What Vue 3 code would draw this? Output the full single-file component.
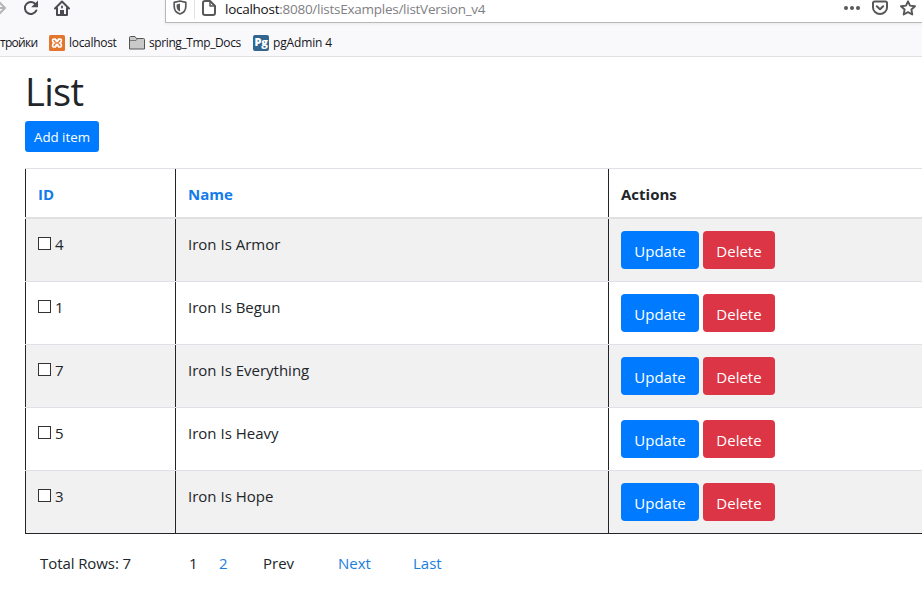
<script setup>
const rows = [
  { id: 4, name: 'Iron Is Armor' },
  { id: 1, name: 'Iron Is Begun' },
  { id: 7, name: 'Iron Is Everything' },
  { id: 5, name: 'Iron Is Heavy' },
  { id: 3, name: 'Iron Is Hope' },
]
</script>

<template>
  <div class="window">
    <header class="chrome">
      <div class="toolbar">
        <div class="nav">
          <svg class="forward" width="6" height="16" viewBox="0 0 6 16" fill="none" stroke="#b5b5b8" stroke-width="2"><path d="M0 8h4M-1 2l6 6-6 6" /></svg>
          <svg class="reload" width="16" height="16" viewBox="0 0 16 16" fill="none" stroke="#4c4c50" stroke-width="2"><path d="M12.6 4.2A6 6 0 1 0 13.3 10.5" stroke-linecap="round" /><path d="M15 .5v6.800H8.200z" fill="#4c4c50" stroke="none" /></svg>
          <svg class="home" width="16" height="16" viewBox="0 0 16 16" fill="none" stroke="#4c4c50" stroke-width="2" stroke-linecap="round" stroke-linejoin="round"><path d="M1 8.500L8 1.500l7 7M3 8v7h10V8" /><path d="M6 15v-5h4v5z" fill="#4c4c50" stroke="none" /><path d="M8 6.500v1" stroke-width="1.800" /></svg>
        </div>
        <div class="address">
          <span class="shield"><svg width="14" height="15" viewBox="0 0 14 15"><path d="M7 1L12.800 2.400V6.500C12.800 10.400 10.500 12.800 7 14 3.500 12.800 1.200 10.400 1.200 6.500V2.400z" fill="none" stroke="#58585b" stroke-width="1.700" stroke-linejoin="round" /><path d="M7 3.600v7.900C4.800 10.500 3.600 9 3.600 6.500V4.400z" fill="#58585b" /></svg></span>
          <svg class="page-icon" width="14" height="16" viewBox="0 0 14 16" fill="none" stroke="#58585b" stroke-width="2" stroke-linejoin="round"><path d="M3 1h5l5 5v7a2 2 0 0 1-2 2H3a2 2 0 0 1-2-2V3a2 2 0 0 1 2-2z" /><path d="M8 1v5h5" stroke-width="1.500" /></svg>
          <span class="url"><b>localhost</b>:8080/listsExamples/listVersion_v4</span>
          <div class="tools">
            <svg width="16" height="16" viewBox="0 0 16 16" fill="#58585b"><circle cx="2" cy="8" r="2" /><circle cx="8" cy="8" r="2" /><circle cx="14" cy="8" r="2" /></svg>
            <svg class="pocket" width="16" height="16" viewBox="0 0 16 16" fill="none" stroke="#58585b" stroke-width="2" stroke-linecap="round" stroke-linejoin="round"><path d="M2.500 1.500h11A1.500 1.500 0 0 1 15 3V7.500A7 6.500 0 0 1 1 7.500V3A1.500 1.500 0 0 1 2.500 1.500z" /><path d="M4.800 6.200L8 9.300l3.200-3.100" /></svg>
            <svg class="star" width="16" height="16" viewBox="0 0 16 16" fill="none" stroke="#58585b" stroke-width="1.900" stroke-linejoin="round"><path d="M8 1.300l2 4.300 5 .6-3.600 3.300.9 5L8 12.200l-4.300 2.300.9-5L1 6.200 6 5.600z" /></svg>
          </div>
        </div>
      </div>
      <div class="bookmarks">
        <span class="bm bm-settings">тройки</span>
        <svg class="bm-icon" width="16" height="16" viewBox="0 0 16 16"><rect width="16" height="16" rx="1.500" fill="#e3752d" /><path d="M5.200 3.300h1.600L8 5l1.200-1.700h1.600c1.600 0 2.400.8 2.400 2.300 0 1-.3 1.800-1 2.400.7.600 1 1.400 1 2.400 0 1.500-.8 2.300-2.400 2.300H9.200L8 11l-1.200 1.700H5.200c-1.600 0-2.400-.8-2.400-2.300 0-1 .3-1.800 1-2.400-.7-.6-1-1.400-1-2.400 0-1.500.8-2.300 2.400-2.300z" fill="#fff" /><path d="M5 5.500l1 1.200M11 5.500L10 6.700M5 10.500l1-1.200M11 10.500L10 9.300M6.700 8h2.600" stroke="#e3752d" stroke-width="1.400" stroke-linecap="round" /></svg>
        <span class="bm bm-local">localhost</span>
        <svg class="bm-icon" width="16" height="16" viewBox="0 0 16 16"><path d="M.5 14V2.500A1 1 0 0 1 1.500 1.500H6l1.500 2h7a1 1 0 0 1 1 1V14z" fill="#c9c9c9" stroke="#555" /><path d="M1 5.500h6l1.200-1.500" fill="none" stroke="#777" /></svg>
        <span class="bm bm-docs">spring_Tmp_Docs</span>
        <span class="pg">Pg</span>
        <span class="bm bm-pg">pgAdmin 4</span>
      </div>
    </header>

    <main>
      <h1><span>List</span></h1>
      <button class="add"><span>Add item</span></button>
      <div class="table">
        <div class="row head">
          <div class="cell"><a class="th-id">ID</a></div>
          <div class="cell"><a class="th-name">Name</a></div>
          <div class="cell"><span class="th-actions">Actions</span></div>
        </div>
        <div v-for="row in rows" :key="row.id" class="row item">
          <div class="cell"><i class="check"></i><span>{{ row.id }}</span></div>
          <div class="cell"><span class="name">{{ row.name }}</span></div>
          <div class="cell actions">
            <button class="update">Update</button>
            <button class="delete">Delete</button>
          </div>
        </div>
      </div>
      <div class="pager">
        <span class="total">Total Rows: 7</span>
        <span class="p1">1</span>
        <a class="p2">2</a>
        <span class="prev">Prev</span>
        <a class="next">Next</a>
        <a class="last">Last</a>
      </div>
    </main>
  </div>
</template>

<style>
body { margin: 0; background: #fff; overflow: hidden; }
</style>

<style scoped>
* { box-sizing: border-box; }
.window { width: 922px; height: 592px; overflow: hidden; background: #fff; color: #212529; font: 15px/24px "Open Sans", "Noto Sans", sans-serif; white-space: nowrap; }
svg { display: block; flex: none; }
.chrome { height: 57px; background: #f9f9fb; border-bottom: 1px solid #e0e0e2; }
.toolbar { display: flex; height: 23px; }
.nav { display: flex; width: 165px; flex: none; }
.reload { margin-left: 17px; }
.home { margin-left: 15px; }
.address { display: flex; flex: 1; height: 23px; background: #fff; border-left: 1px solid #b8b8ba; border-bottom: 1px solid #b8b8ba; box-shadow: 0 1px 3px #0001; }
.shield { width: 29px; height: 19px; padding-left: 7px; border-right: 1px solid #e3e3e5; }
.page-icon { margin-left: 7px; }
.url { margin-left: 9px; font-size: 13.5px; line-height: 18px; color: #808084; letter-spacing: -.26px; }
.url b { font-weight: 400; color: #111; }
.tools { display: flex; margin-left: auto; margin-right: 6px; }
.pocket { margin-left: 12px; }
.star { margin-left: 12px; }
.bookmarks { display: flex; align-items: center; height: 33px; padding-top: 6px; font-size: 12px; line-height: 16px; color: #15141a; }
.bm-settings { width: 49px; letter-spacing: -.7px; }
.bm-icon + .bm { margin-left: 4px; }
.bm-local { width: 60px; letter-spacing: -.3px; }
.bm-docs { width: 104px; letter-spacing: -.4px; }
.pg { width: 16px; height: 16px; border-radius: 2px; background: #326690; color: #fff; font: 800 11px/14px "Open Sans", sans-serif; letter-spacing: -.4px; text-align: center; }
.bm-pg { margin-left: 4px; letter-spacing: -.15px; }
main { padding-left: 25px; }
h1 { margin: 0; padding-top: 10px; height: 64px; font-size: 38px; line-height: 48px; font-weight: 400; letter-spacing: -.7px; }
button { display: block; border: 0; padding: 0; border-radius: 4px; color: #fff; background: #007bff; font: 15px/24px "Open Sans", sans-serif; }
.add { width: 74px; height: 31px; padding-top: 1px; border-radius: 3px; font-size: 13.3px; line-height: 30px; }
.table { margin-top: 16px; border-bottom: 1px solid #212529; }
.row { display: grid; grid-template-columns: 150px 433px 1fr; border-top: 1px solid #dee2e6; }
.head { height: 51px; border-bottom: 2px solid #dee0e2; font-weight: 700; }
.item { height: 63px; }
.head + .item { height: 62px; border-top: 0; }
.item:nth-child(even) { background: #f1f1f1; }
.cell { display: flex; align-items: flex-start; border-left: 1px solid #212529; padding: 13px 0 0 12px; }
.actions { padding-top: 12px; gap: 4px; }
.check { width: 13px; height: 13px; margin: 5px 4px 0 0; border: 1px solid #333; background: #fff; }
.update { width: 78px; height: 38px; padding-top: 2px; }
.delete { width: 72px; height: 38px; padding-top: 2px; background: #dc3545; }
a { color: #007bff; }
.head a { color: #137bea; }
.pager { display: flex; padding: 17px 0 0 15px; }
.total { width: 149px; letter-spacing: -.08px; }
.p1 { width: 30px; }
.p2 { width: 44px; }
.prev { width: 75px; }
.next { width: 75px; }
.pager a { color: #1c7de0; }
</style>
